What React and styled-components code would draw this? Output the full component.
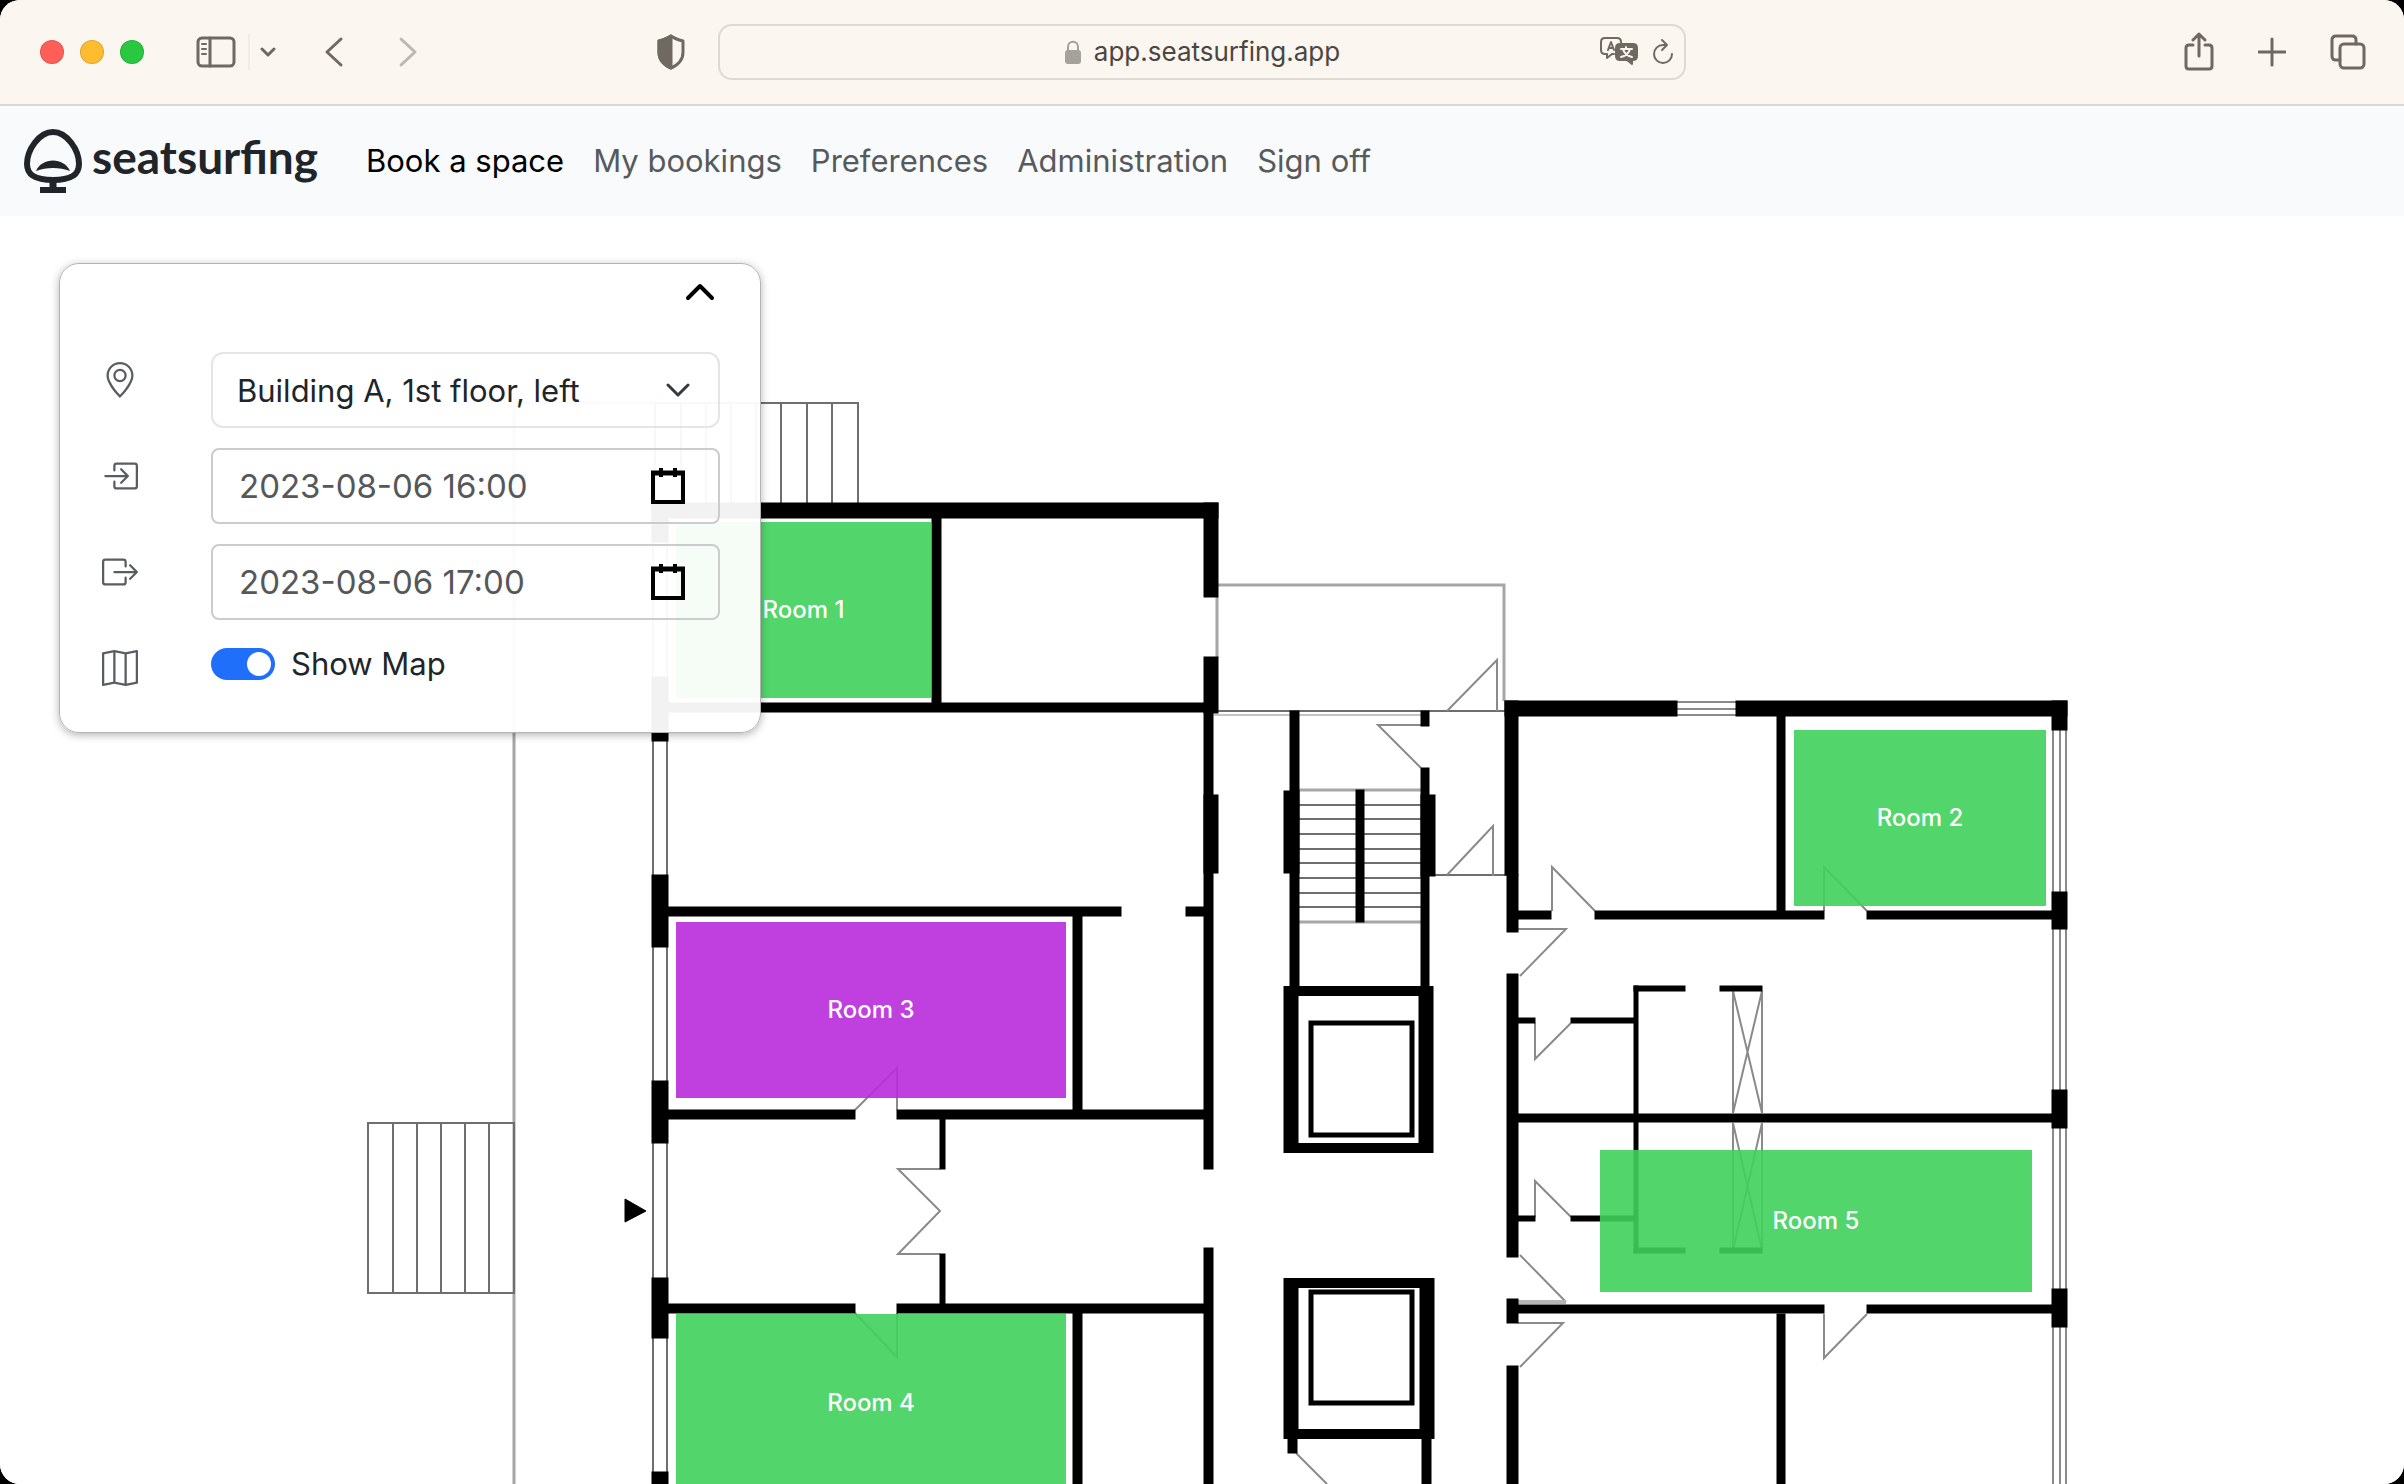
import React, { useState } from "react";
import styled, { createGlobalStyle } from "styled-components";
import { BsGeoAlt, BsBoxArrowInRight, BsBoxArrowRight, BsMap } from "react-icons/bs";

const GlobalStyle = createGlobalStyle`
  *, *::before, *::after { box-sizing: border-box; }
  html, body { margin: 0; background: #000; }
  body { font-family: Inter, "Liberation Sans", sans-serif; color: #212529; }
  button, input, select { font: inherit; color: inherit; }
`;

const Window = styled.div`
  display: flex;
  flex-direction: column;
  height: 100vh;
  overflow: hidden;
  background: #fff;
  border-radius: 20px;
`;

const Toolbar = styled.header`
  display: grid;
  grid-template-columns: 1fr minmax(0, 968px) 1fr;
  align-items: center;
  height: 106px;
  flex: none;
  background: #fcf6f0;
  border-bottom: 2px solid #d8d7d2;
`;

const ToolGroup = styled.div`
  display: flex;
  align-items: center;
  justify-content: ${(p) => (p.$end ? "flex-end" : "flex-start")};
  gap: ${(p) => p.$gap || 0}px;
  padding: ${(p) => (p.$end ? "0 38px 0 0" : "0 32px 0 40px")};
`;

const Lights = styled.div`
  display: flex;
  gap: 16px;
  margin-right: 52px;
`;

const Light = styled.button`
  width: 24px;
  height: 24px;
  padding: 0;
  border: 1px solid rgba(0, 0, 0, 0.12);
  border-radius: 50%;
  background: ${(p) => p.$color};
`;

const Tool = styled.button`
  display: flex;
  padding: 0;
  border: 0;
  background: none;
  color: ${(p) => (p.$dim ? "#bcb7b1" : "#6f6962")};
  svg { display: block; }
`;

const Split = styled.span`
  width: 2px;
  height: 36px;
  margin: 0 10px 0 12px;
  background: #f0ebe5;
`;

const History = styled.div`
  display: flex;
  gap: 54px;
  margin-left: 48px;
  margin-right: auto;
`;

const AddressBar = styled.div`
  display: grid;
  grid-template-columns: 1fr auto 1fr;
  align-items: center;
  height: 56px;
  padding: 0 10px;
  border: 2px solid #dfd9d3;
  border-radius: 14px;
`;

const Address = styled.a`
  grid-column: 2;
  display: flex;
  align-items: center;
  gap: 12px;
  font-size: 26px;
  line-height: 32px;
  color: #4a4642;
  text-decoration: none;
`;

const AddressTools = styled.div`
  display: flex;
  align-items: center;
  justify-content: flex-end;
  gap: 14px;
`;

const Navbar = styled.nav`
  display: flex;
  align-items: center;
  flex: none;
  height: 110px;
  padding: 0 24px;
  background: #f8fafb;
`;

const Brand = styled.a`
  display: flex;
  align-items: flex-start;
  gap: 10px;
  width: 326px;
  color: #212529;
  font-family: Lato, sans-serif;
  font-size: 46px;
  font-weight: 700;
  line-height: 56px;
  text-decoration: none;
`;

const NavLinks = styled.ul`
  display: flex;
  gap: 29px;
  margin: 0;
  padding: 0 16px;
  list-style: none;
`;

const NavLink = styled.a`
  font-size: 31px;
  line-height: 48px;
  color: ${(p) => (p.$active ? "#000" : "#575a5c")};
  text-decoration: none;
`;

const MapArea = styled.main`
  position: relative;
  flex: 1;
  overflow: hidden;
  background: #fff;
`;

const Plan = styled.svg`
  display: block;
`;

const Room = styled.button`
  position: absolute;
  left: ${(p) => p.$x}px;
  top: ${(p) => p.$y}px;
  width: ${(p) => p.$w}px;
  height: ${(p) => p.$h}px;
  padding: 0;
  border: 0;
  background: ${(p) => (p.$booked ? "rgba(184, 43, 220, 0.9)" : "rgba(63, 210, 91, 0.9)")};
  color: #fff;
  font-size: 24px;
  font-weight: 500;
  line-height: 32px;
`;

const Panel = styled.form`
  position: absolute;
  left: 59px;
  top: 47px;
  width: 702px;
  padding: 18px 40px 36px;
  border: 1px solid #b4b4b4;
  border-radius: 20px;
  background: rgba(255, 255, 255, 0.95);
  box-shadow: 0 2px 8px rgba(0, 0, 0, 0.3);
`;

const Collapse = styled.button`
  display: block;
  margin: 0 5px 50px auto;
  padding: 0;
  border: 0;
  background: none;
  svg { display: block; }
`;

const Field = styled.div`
  display: grid;
  grid-template-columns: 111px minmax(0, 1fr);
  align-items: start;
  & + & { margin-top: 20px; }
`;

const FieldIcon = styled.label`
  display: flex;
  padding: 10px 2px;
  color: #5a5d60;
`;

const Control = styled.div`
  display: flex;
  align-items: center;
  height: 76px;
  border: 2px solid ${(p) => (p.$soft ? "#e3e5e7" : "#cbcccd")};
  border-radius: ${(p) => (p.$soft ? 12 : 8)}px;
  position: relative;
`;

const Select = styled.select`
  flex: 1;
  min-width: 0;
  height: 100%;
  padding: 0 72px 0 24px;
  border: 0;
  outline: 0;
  appearance: none;
  background: none;
  font-size: 31px;
`;

const SelectArrow = styled.svg`
  position: absolute;
  right: 28px;
  pointer-events: none;
`;

const DateInput = styled.input`
  flex: 1;
  min-width: 0;
  height: 100%;
  padding: 0 0 0 26px;
  border: 0;
  outline: 0;
  background: none;
  font-size: 33px;
  color: #55585b;
`;

const CalendarButton = styled.button`
  margin-right: 32px;
  padding: 0;
  border: 0;
  background: none;
  svg { display: block; }
`;

const SwitchLabel = styled.label`
  display: flex;
  align-items: center;
  gap: 16px;
  font-size: 31px;
  line-height: 48px;
`;

const Switch = styled.input`
  appearance: none;
  width: 64px;
  height: 32px;
  margin: 0;
  padding: 4px;
  border-radius: 16px;
  background: #adb5bd;
  &::before {
    content: "";
    display: block;
    width: 24px;
    height: 24px;
    border-radius: 50%;
    background: #fff;
  }
  &:checked { background: #1f6ffb; }
  &:checked::before { margin-left: auto; }
`;

const Line = ({ w, h, s = 3, children, ...rest }) => (
  <svg width={w} height={h} viewBox={`0 0 ${w} ${h}`} fill="none" stroke="currentColor" strokeWidth={s} strokeLinecap="round" strokeLinejoin="round" aria-hidden="true" {...rest}>
    {children}
  </svg>
);

/* Each wall is [left, top, right, bottom]. */
const WALLS = [
  [652, 503, 1218, 518], [652, 503, 668, 542], [652, 677, 668, 741], [652, 875, 668, 947],
  [652, 1081, 668, 1143], [652, 1278, 668, 1338], [652, 1472, 668, 1484],
  [932, 518, 941, 704], [1204, 503, 1218, 597], [1204, 657, 1218, 713], [668, 703, 1206, 712],
  [1204, 712, 1213, 1169], [1204, 795, 1218, 873], [1204, 1248, 1213, 1484],
  [668, 907, 1121, 916], [1186, 907, 1205, 916], [1073, 915, 1082, 1111],
  [668, 1110, 855, 1119], [897, 1110, 1205, 1119], [940, 1119, 945, 1169], [940, 1254, 945, 1305],
  [668, 1304, 855, 1313], [897, 1304, 1205, 1313], [1073, 1313, 1082, 1484],
  [1290, 711, 1299, 988], [1284, 791, 1299, 873], [1421, 711, 1429, 726], [1421, 768, 1429, 988], [1421, 795, 1435, 876],
  [1356, 790, 1364, 922],
  [1505, 701, 1677, 716], [1736, 701, 2067, 716], [1505, 701, 1518, 875], [1507, 875, 1518, 932],
  [1507, 974, 1518, 1257], [1507, 1299, 1518, 1323], [1507, 1366, 1518, 1484],
  [1777, 716, 1785, 911], [1518, 911, 1551, 919], [1595, 911, 1824, 919], [1867, 911, 2053, 919],
  [2052, 701, 2067, 730], [2052, 892, 2067, 929], [2052, 1090, 2067, 1128], [2052, 1289, 2067, 1327],
  [1518, 1018, 1535, 1023], [1571, 1018, 1635, 1023], [1634, 986, 1638, 1253],
  [1634, 986, 1685, 991], [1720, 986, 1762, 991], [1518, 1114, 2053, 1122],
  [1518, 1216, 1535, 1221], [1571, 1216, 1635, 1221], [1634, 1248, 1685, 1253], [1720, 1248, 1762, 1253],
  [1518, 1305, 1824, 1313], [1867, 1305, 2053, 1313], [1777, 1314, 1785, 1484],
  [1288, 1436, 1297, 1453], [1422, 1436, 1431, 1484],
];

const SIDE_WINDOWS = [[542, 677], [741, 875], [947, 1081], [1143, 1278], [1338, 1472]];
const EAST_WINDOWS = [[730, 892], [929, 1090], [1128, 1289], [1327, 1484]];

const DOORS = [
  "M855 1110 897 1068V1110", "M855 1313 897 1357V1313",
  "M940 1169H898L940 1211 898 1254H940",
  "M1421 725H1378L1421 768", "M1447 711 1497 660V711", "M1447 875 1493 826V876",
  "M1552 911V867L1595 911", "M1824 911V867L1867 911", "M1518 929H1566L1520 976",
  "M1535 1023V1059L1571 1023", "M1535 1217V1181L1571 1217",
  "M1520 1255 1566 1302", "M1518 1323H1563L1520 1367", "M1824 1314V1358L1867 1314", "M1296 1453 1327 1484",
];

const STEPS = [805, 819, 834, 849, 863, 878, 893, 907];

function FloorPlan() {
  return (
    <Plan width="2404" height="1268" viewBox="0 216 2404 1268" fill="none" role="img" aria-label="Floor plan">
      <g stroke="#a6a6a6" strokeWidth="3">
        <path d="M655 403H514V1484" />
        <path d="M1218 585H1504V701M1217 597V657" />
        <path d="M1214 715H1421" stroke="#c4c4c4" strokeWidth="2" />
        <path d="M1299 790H1421M1299 922H1421" />
      </g>
      <g stroke="#6e6e6e" strokeWidth="2">
        <path d="M655 403H858V503M655 403V503M681 403V503M706 403V503M731 403V503M756 403V503M781 403V503M807 403V503M832 403V503" />
        <path d="M368 1123H514V1293H368ZM393 1123V1293M417 1123V1293M441 1123V1293M465 1123V1293M489 1123V1293" />
        <path d="M1213 711H1505M1435 875H1507" />
        {STEPS.map((y) => <path key={y} d={`M1299 ${y}H1421`} />)}
        {SIDE_WINDOWS.map(([a, b]) => <path key={a} d={`M653 ${a}V${b}M667 ${a}V${b}`} />)}
      </g>
      <g stroke="#8a8a8a" strokeWidth="2">
        {EAST_WINDOWS.map(([a, b]) => <path key={a} d={`M2053 ${a}V${b}M2060 ${a}V${b}M2066 ${a}V${b}`} />)}
        <path d="M1677 702H1736M1677 709H1736M1677 715H1736" />
        <path d="M1733 991V1113M1762 991V1113M1733 991 1762 1113M1762 991 1733 1113" />
        <path d="M1733 1123V1250M1762 1123V1250M1733 1123 1762 1250M1762 1123 1733 1250" />
        {DOORS.map((d) => <path key={d} d={d} />)}
      </g>
      <path d="M1518 1302H1566" stroke="#b5b5b5" strokeWidth="4" />
      <g fill="#000" stroke="#000" strokeWidth="1">
        {WALLS.map(([l, t, r, b]) => <rect key={`${l}-${t}-${r}`} x={l} y={t} width={r - l} height={b - t} />)}
        <path d="M625 1199 646 1211 625 1222Z" />
      </g>
      <g stroke="#000">
        <path strokeWidth="15" d="M1291 986V1153M1426 986V1153" />
        <path strokeWidth="10" d="M1284 991H1433M1284 1148H1433M1284 1283H1434M1284 1434H1434" />
        <path strokeWidth="15" d="M1291 1278V1439M1427 1278V1439" />
        <rect x="1311" y="1023" width="101" height="112" strokeWidth="5" />
        <rect x="1311" y="1292" width="101" height="111" strokeWidth="5" />
      </g>
    </Plan>
  );
}

const ROOMS = [
  { name: "Room 1", x: 676, y: 306, w: 255, h: 176 },
  { name: "Room 2", x: 1794, y: 514, w: 252, h: 176 },
  { name: "Room 3", x: 676, y: 706, w: 390, h: 176, booked: true },
  { name: "Room 4", x: 676, y: 1098, w: 390, h: 178 },
  { name: "Room 5", x: 1600, y: 934, w: 432, h: 142 },
];

const LINKS = ["Book a space", "My bookings", "Preferences", "Administration", "Sign off"];

function DateField({ id, label, icon, initial }) {
  const [value, setValue] = useState(initial);
  return (
    <Field>
      <FieldIcon htmlFor={id} aria-label={label}>{icon}</FieldIcon>
      <Control>
        <DateInput id={id} value={value} onChange={(e) => setValue(e.target.value)} />
        <CalendarButton type="button" aria-label="Open calendar">
          <svg width="36" height="36" viewBox="0 0 36 36" fill="none" stroke="#000" aria-hidden="true">
            <path d="M3 3V34H33V3" strokeWidth="4" />
            <path d="M1 5H35" strokeWidth="5" />
            <path d="M11 0V9M25 0V9" strokeWidth="4" />
          </svg>
        </CalendarButton>
      </Control>
    </Field>
  );
}

export default function App() {
  const [showMap, setShowMap] = useState(true);
  return (
    <>
      <GlobalStyle />
      <Window>
        <Toolbar>
          <ToolGroup>
            <Lights>
              <Light $color="#ff5f57" aria-label="Close" />
              <Light $color="#febc2e" aria-label="Minimize" />
              <Light $color="#28c840" aria-label="Zoom" />
            </Lights>
            <Tool aria-label="Sidebar">
              <Line w={40} h={32}>
                <rect x="2" y="2" width="36" height="28" rx="4" />
                <path d="M14 2V30" />
                <path d="M6 8H10M6 13H10M6 18H10" strokeWidth="2" />
              </Line>
            </Tool>
            <Split />
            <Tool aria-label="Tab groups"><Line w={16} h={12}><path d="M2 3 8 9 14 3" /></Line></Tool>
            <History>
              <Tool aria-label="Back"><Line w={20} h={32}><path d="M17 3 3 16 17 29" /></Line></Tool>
              <Tool $dim aria-label="Forward"><Line w={20} h={32}><path d="M3 3 17 16 3 29" /></Line></Tool>
            </History>
            <Tool aria-label="Privacy report">
              <Line w={30} h={36}>
                <path d="M15 2C11 5 7 6 3 7V18C3 26 8 31 15 34 22 31 27 26 27 18V7C23 6 19 5 15 2Z" />
                <path d="M15 2C11 5 7 6 3 7V18C3 26 8 31 15 34Z" fill="currentColor" />
              </Line>
            </Tool>
          </ToolGroup>
          <AddressBar>
            <Address href="#">
              <svg width="18" height="26" viewBox="0 0 18 26" aria-hidden="true">
                <path d="M4 12V8C4 1 14 1 14 8V12" fill="none" stroke="#a5a19b" strokeWidth="2" />
                <rect x="1" y="11" width="16" height="14" rx="3" fill="#a5a19b" />
              </svg>
              app.seatsurfing.app
            </Address>
            <AddressTools>
              <Tool aria-label="Translate">
                <svg width="38" height="30" viewBox="0 0 38 30" fill="none" stroke="currentColor" strokeWidth="2" strokeLinejoin="round" strokeLinecap="round" aria-hidden="true">
                  <path d="M14 17H12L7 21V17H5C3 17 1 16 1 13V5C1 2 3 1 5 1H17C20 1 21 3 21 5V6" />
                  <path d="M8 13 11 5 14 13M9 11H13" />
                  <path d="M20 7H33C36 7 37 9 37 11V19C37 22 35 23 33 23H32V27L27 23H20C17 23 16 21 16 19V11C16 9 17 7 20 7Z" fill="currentColor" />
                  <path d="M21 12H32M26 10V12M30 12C29 16 25 19 21 20M23 12C24 16 28 19 32 20" stroke="#fcf6f0" />
                </svg>
              </Tool>
              <Tool aria-label="Reload">
                <Line w={22} h={28} s={2}><path d="M10 2 15 7 10 12M15 7H11A9 9 0 1 0 20 16" /></Line>
              </Tool>
            </AddressTools>
          </AddressBar>
          <ToolGroup $end $gap={44}>
            <Tool aria-label="Share">
              <Line w={30} h={40}><path d="M9 13H5Q2 13 2 16V34Q2 37 5 37H25Q28 37 28 34V16Q28 13 25 13H21M15 24V2M9 8 15 2 21 8" /></Line>
            </Tool>
            <Tool aria-label="New tab"><Line w={28} h={30}><path d="M14 2V28M1 15H27" /></Line></Tool>
            <Tool aria-label="Tab overview">
              <Line w={36} h={36}><rect x="10" y="10" width="24" height="24" rx="4" /><path d="M10 26H6Q2 26 2 22V6Q2 2 6 2H22Q26 2 26 6V10" /></Line>
            </Tool>
          </ToolGroup>
        </Toolbar>

        <Navbar>
          <Brand href="#">
            <svg width="58" height="64" viewBox="0 0 58 64" fill="none" stroke="currentColor" aria-hidden="true">
              <path d="M29 3C15 3 3 21 3 35 3 46 11 51 29 51S55 46 55 35C55 21 43 3 29 3Z" strokeWidth="6" />
              <path d="M12 42C18 28 40 28 46 42C36 38 22 38 12 42Z" fill="currentColor" stroke="none" />
              <path d="M29 52V60" strokeWidth="7" />
              <path d="M16 61H42" strokeWidth="6" />
            </svg>
            seatsurfing
          </Brand>
          <NavLinks>
            {LINKS.map((text, i) => (
              <li key={text}><NavLink href="#" $active={i === 0}>{text}</NavLink></li>
            ))}
          </NavLinks>
        </Navbar>

        <MapArea>
          {showMap && <FloorPlan />}
          {showMap && ROOMS.map((r) => (
            <Room key={r.name} $x={r.x} $y={r.y} $w={r.w} $h={r.h} $booked={r.booked}>{r.name}</Room>
          ))}
          <Panel onSubmit={(e) => e.preventDefault()}>
            <Collapse type="button" aria-label="Collapse">
              <svg width="30" height="20" viewBox="0 0 30 20" fill="none" stroke="#000" strokeWidth="4" strokeLinecap="round" strokeLinejoin="round" aria-hidden="true">
                <path d="M3 16 15 4 27 16" />
              </svg>
            </Collapse>
            <Field>
              <FieldIcon htmlFor="area" aria-label="Area"><BsGeoAlt size={36} /></FieldIcon>
              <Control $soft>
                <Select id="area">
                  <option>Building A, 1st floor, left</option>
                </Select>
                <SelectArrow width="24" height="16" viewBox="0 0 24 16" fill="none" stroke="#343a40" strokeWidth="3" strokeLinecap="round" strokeLinejoin="round" aria-hidden="true">
                  <path d="M2 3 12 13 22 3" />
                </SelectArrow>
              </Control>
            </Field>
            <DateField id="enter" label="Enter" icon={<BsBoxArrowInRight size={36} />} initial="2023-08-06 16:00" />
            <DateField id="leave" label="Leave" icon={<BsBoxArrowRight size={36} />} initial="2023-08-06 17:00" />
            <Field>
              <FieldIcon htmlFor="show-map" aria-label="Map"><BsMap size={36} /></FieldIcon>
              <SwitchLabel>
                <Switch id="show-map" type="checkbox" checked={showMap} onChange={(e) => setShowMap(e.target.checked)} />
                Show Map
              </SwitchLabel>
            </Field>
          </Panel>
        </MapArea>
      </Window>
    </>
  );
}
